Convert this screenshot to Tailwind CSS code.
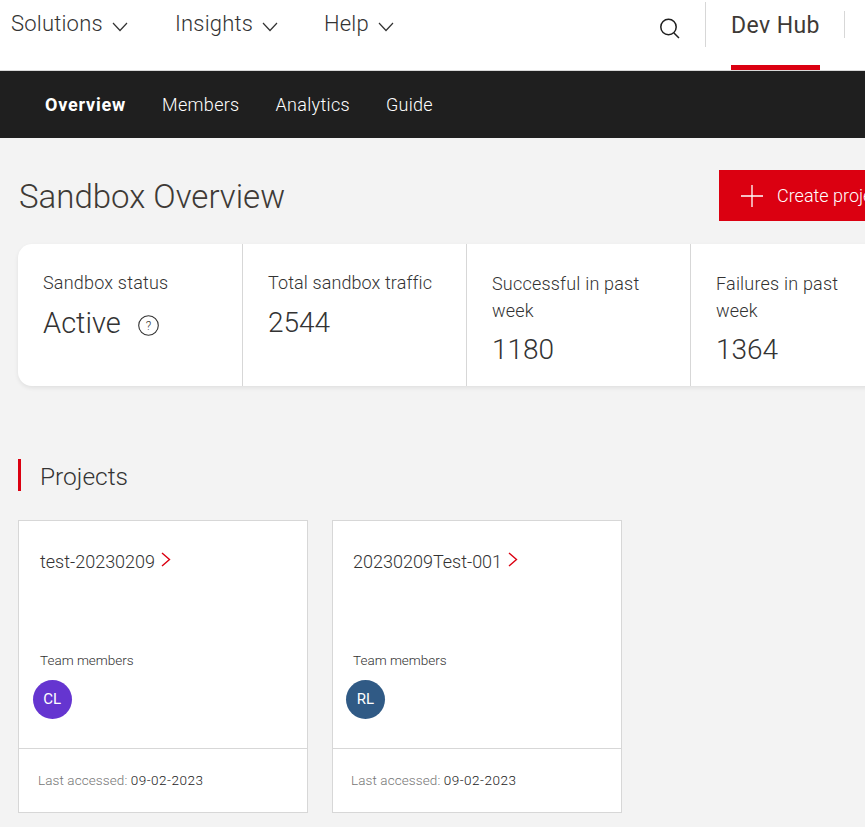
<!DOCTYPE html>
<html lang="en">
<head>
  <meta charset="UTF-8" />
  <title>Sandbox Overview | Dev Hub</title>
  <script src="https://cdn.jsdelivr.net/npm/@tailwindcss/browser@4"></script>
</head>
<body class="bg-[#f3f3f3] text-[#333333] font-['Roboto',sans-serif] w-[865px] h-[827px] overflow-hidden">
  <!-- Top navigation -->
  <header class="h-[71px] bg-white border-b border-[#d7d7d7] flex items-start">
    <nav class="flex text-[22px] leading-[24px] tracking-[0.2px] pt-[12px] pl-[11px] font-light">
      <a class="flex items-center w-[164px]">Solutions
        <svg class="ml-[9px] mt-[5px] w-[16px] h-[10px]" viewBox="0 0 16 10" fill="none" stroke="#333" stroke-width="1.2"><path d="M1 1l7 7.5L15 1"/></svg>
      </a>
      <a class="flex items-center w-[149px]">Insights
        <svg class="ml-[9px] mt-[5px] w-[16px] h-[10px]" viewBox="0 0 16 10" fill="none" stroke="#333" stroke-width="1.2"><path d="M1 1l7 7.5L15 1"/></svg>
      </a>
      <a class="flex items-center">Help
        <svg class="ml-[9px] mt-[5px] w-[16px] h-[10px]" viewBox="0 0 16 10" fill="none" stroke="#333" stroke-width="1.2"><path d="M1 1l7 7.5L15 1"/></svg>
      </a>
    </nav>
    <div class="ml-auto flex items-start h-[70px]">
      <div class="w-[46px] pt-[17px] flex justify-start">
        <svg class="w-[22px] h-[22px]" viewBox="0 0 22 22" fill="none" stroke="#1f1f1f" stroke-width="1.5"><circle cx="9.5" cy="10" r="7.7"/><path d="M15 16l5 5"/></svg>
      </div>
      <div class="mt-[2px] h-[45px] border-l border-[#d7d7d7] w-[26px]"></div>
      <div class="relative h-[70px] w-[89px] text-center text-[23px] leading-[24px] tracking-[0.4px] font-normal pt-[14px] text-[#3e3a36] whitespace-nowrap">
        Dev Hub
        <span class="absolute left-0 right-0 bottom-0 h-[5px] bg-[#db0011]"></span>
      </div>
      <div class="ml-[24px] mt-[11px] h-[27px] border-l border-[#d7d7d7] w-[21px]"></div>
    </div>
  </header>

  <!-- Sub navigation -->
  <nav class="h-[67px] bg-[#1f1f1f] text-white flex items-center pl-[45px] gap-[36px] text-[18px] tracking-[0.3px] pb-[1px]">
    <a class="font-bold tracking-[0.8px]">Overview</a>
    <a class="font-light">Members</a>
    <a class="font-light">Analytics</a>
    <a class="font-light">Guide</a>
  </nav>

  <main class="pl-[18px]">
    <div class="h-[106px] flex items-start justify-between pt-[32px]">
      <h1 class="text-[33px] leading-[52px] font-light mt-[1px] ml-[1px] text-[#3e3a36]">Sandbox Overview</h1>
      <button class="w-[146px] h-[51px] bg-[#db0011] text-white flex items-center pl-[22px] gap-[14px] text-[18px] font-light whitespace-nowrap overflow-hidden">
        <svg class="w-[22px] h-[22px] shrink-0" viewBox="0 0 22 22" fill="none" stroke="#fff" stroke-width="1.3"><path d="M11 0v22M0 11h22"/></svg>
        Create project
      </button>
    </div>

    <!-- Stat tiles -->
    <section class="w-[1000px] h-[142px] bg-white rounded-l-[14px] shadow-[0_2px_4px_rgba(0,0,0,0.08)] flex">
      <div class="w-[225px] border-r border-[#d7d7d7] pl-[25px] pt-[27px] pr-[18px]">
        <p class="text-[18px] leading-[24px] tracking-[0.2px] font-light">Sandbox status</p>
        <div class="flex items-center mt-[10px] text-[29px] leading-[36px] font-light">
          Active
          <svg class="ml-[17px] mt-[4px] w-[21px] h-[21px]" viewBox="0 0 21 21" fill="none" stroke="#333" stroke-width="1.1"><circle cx="10.5" cy="10.5" r="9.8"/><text x="10.5" y="15" text-anchor="middle" font-size="12" fill="#333" stroke="none">?</text></svg>
        </div>
      </div>
      <div class="w-[224px] border-r border-[#d7d7d7] pl-[25px] pt-[27px] pr-[18px]">
        <p class="text-[18px] leading-[24px] tracking-[0.1px] font-light whitespace-nowrap">Total sandbox traffic</p>
        <p class="mt-[10px] text-[28px] leading-[36px] font-light">2544</p>
      </div>
      <div class="w-[224px] border-r border-[#d7d7d7] pl-[25px] pt-[26px] pr-[40px]">
        <p class="text-[18px] leading-[27px] tracking-[0.2px] font-light">Successful in past week</p>
        <p class="mt-[8px] text-[28px] leading-[36px] font-light">1180</p>
      </div>
      <div class="w-[224px] border-r border-[#d7d7d7] pl-[25px] pt-[26px] pr-[40px]">
        <p class="text-[18px] leading-[27px] tracking-[0.2px] font-light">Failures in past week</p>
        <p class="mt-[8px] text-[28px] leading-[36px] font-light">1364</p>
      </div>
    </section>

    <h2 class="mt-[73px] h-[32px] border-l-[3px] border-[#db0011] pl-[19px] text-[24.5px] leading-[36px] font-light">Projects</h2>

    <!-- Project cards -->
    <section class="mt-[29px] flex gap-[24px]">
      <article class="w-[290px] h-[293px] bg-white border border-[#d7d7d7] flex flex-col">
        <div class="h-[227px] relative">
          <p class="pl-[21px] pt-[29px] text-[18px] leading-[24px] font-light flex items-start">test-20230209
            <svg class="ml-[6px] mt-[2px] w-[10px] h-[15px]" viewBox="0 0 10 15" fill="none" stroke="#db0011" stroke-width="1.4"><path d="M1 1l7.5 6.5L1 14"/></svg>
          </p>
          <p class="absolute left-[21px] top-[130px] text-[13.5px] leading-[18px] font-light">Team members</p>
          <span class="absolute left-[14px] top-[159px] w-[38.5px] h-[39px] rounded-full bg-[#6535d0] text-white text-[15px] flex items-center justify-center">CL</span>
        </div>
        <div class="border-t border-[#d7d7d7] pl-[19px] pt-[22px] text-[13.5px] leading-[18px] font-light tracking-[0.1px]">
          <span class="text-[#767676]">Last accessed:</span> <span class="text-[#222222] tracking-[0.5px]">09-02-2023</span>
        </div>
      </article>
      <article class="w-[290px] h-[293px] bg-white border border-[#d7d7d7] flex flex-col">
        <div class="h-[227px] relative">
          <p class="pl-[20px] pt-[29px] text-[18px] leading-[24px] font-light flex items-start">20230209Test-001
            <svg class="ml-[6px] mt-[2px] w-[10px] h-[15px]" viewBox="0 0 10 15" fill="none" stroke="#db0011" stroke-width="1.4"><path d="M1 1l7.5 6.5L1 14"/></svg>
          </p>
          <p class="absolute left-[20px] top-[130px] text-[13.5px] leading-[18px] font-light">Team members</p>
          <span class="absolute left-[13px] top-[159px] w-[39px] h-[39px] rounded-full bg-[#305a85] text-white text-[15px] flex items-center justify-center">RL</span>
        </div>
        <div class="border-t border-[#d7d7d7] pl-[18px] pt-[22px] text-[13.5px] leading-[18px] font-light tracking-[0.1px]">
          <span class="text-[#767676]">Last accessed:</span> <span class="text-[#222222] tracking-[0.5px]">09-02-2023</span>
        </div>
      </article>
    </section>
  </main>
</body>
</html>
